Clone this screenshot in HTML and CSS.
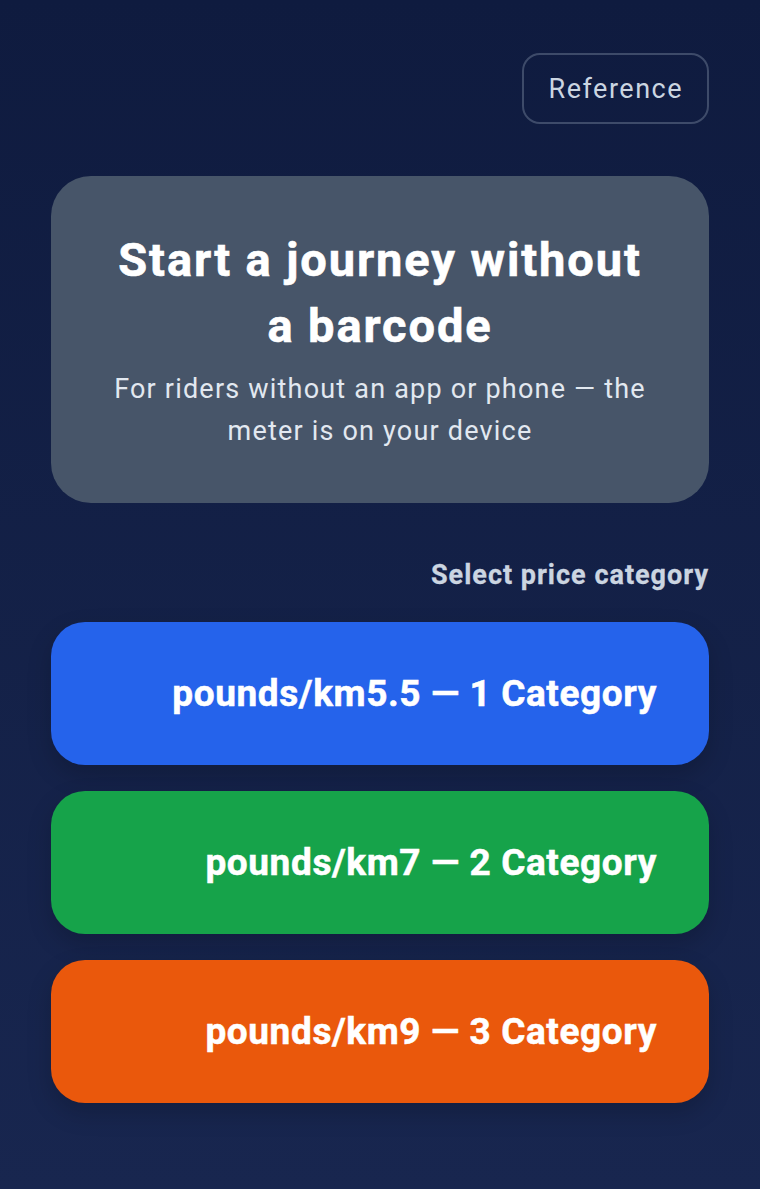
FILE: index.html
```html
<!DOCTYPE html>
<html lang="en">

<head>
    <meta charset="UTF-8">
    <meta name="viewport" content="width=device-width, initial-scale=1.0">
    <title>Start a journey</title>
    <link rel="stylesheet" href="styles.css">
</head>

<body>
    <div class="app">
        <div class="top-bar">
            <button class="ref-btn">Reference</button>
        </div>

        <div class="intro-card">
            <h1>Start a journey without a barcode</h1>
            <p>For riders without an app or phone — the meter is on your device</p>
        </div>

        <h2 class="section-label">Select price category</h2>

        <div class="categories">
            <button class="category blue">pounds/km5.5 — 1 Category</button>
            <button class="category green">pounds/km7 — 2 Category</button>
            <button class="category orange">pounds/km9 — 3 Category</button>
        </div>
    </div>
</body>

</html>
```

FILE: styles.css
```css
html {
    min-height: 100%;
    background: linear-gradient(180deg, #0f1b3f 0%, #18264f 100%);
}

body {
    font-family: Roboto, "Noto Sans", Arial, sans-serif;
    margin: 0;
    padding: 0;
    min-height: 100vh;
    color: #fff;
}

.app {
    padding: 53px 51px 40px;
}

.top-bar {
    display: flex;
    justify-content: flex-end;
}

.ref-btn {
    font-family: inherit;
    font-size: 27px;
    letter-spacing: 1.5px;
    color: #cbd5e1;
    background: transparent;
    border: 2px solid rgba(148, 163, 184, 0.35);
    border-radius: 18px;
    height: 71px;
    padding: 0 24px 0 25px;
    cursor: pointer;
}

.intro-card {
    margin-top: 52px;
    background-color: #475569;
    border-radius: 40px;
    padding: 51px 52px;
    text-align: center;
}

.intro-card h1 {
    margin: 0;
    font-size: 47px;
    line-height: 66px;
    font-weight: 700;
    letter-spacing: 1.9px;
    -webkit-text-stroke: 0.6px #fff;
    color: #fff;
}

.intro-card p {
    margin: 9px 0 0;
    font-size: 27px;
    line-height: 42px;
    letter-spacing: 1.2px;
    color: #e2e8f0;
}

.section-label {
    margin: 54px 0 29px;
    text-align: right;
    font-size: 27px;
    line-height: 36px;
    font-weight: 700;
    letter-spacing: 1px;
    -webkit-text-stroke: 0.3px #cbd5e1;
    color: #cbd5e1;
}

.categories {
    display: flex;
    flex-direction: column;
    gap: 26px;
}

.category {
    font-family: inherit;
    height: 143px;
    border: none;
    border-radius: 34px;
    padding: 0 52px;
    display: flex;
    align-items: center;
    justify-content: flex-end;
    font-size: 37px;
    font-weight: 700;
    letter-spacing: 0.6px;
    -webkit-text-stroke: 0.5px #fff;
    color: #fff;
    cursor: pointer;
    box-shadow: 0 10px 24px rgba(0, 0, 0, 0.18);
}

.category.blue {
    background-color: #2563eb;
}

.category.green {
    background-color: #16a34a;
}

.category.orange {
    background-color: #ea580c;
}
```
